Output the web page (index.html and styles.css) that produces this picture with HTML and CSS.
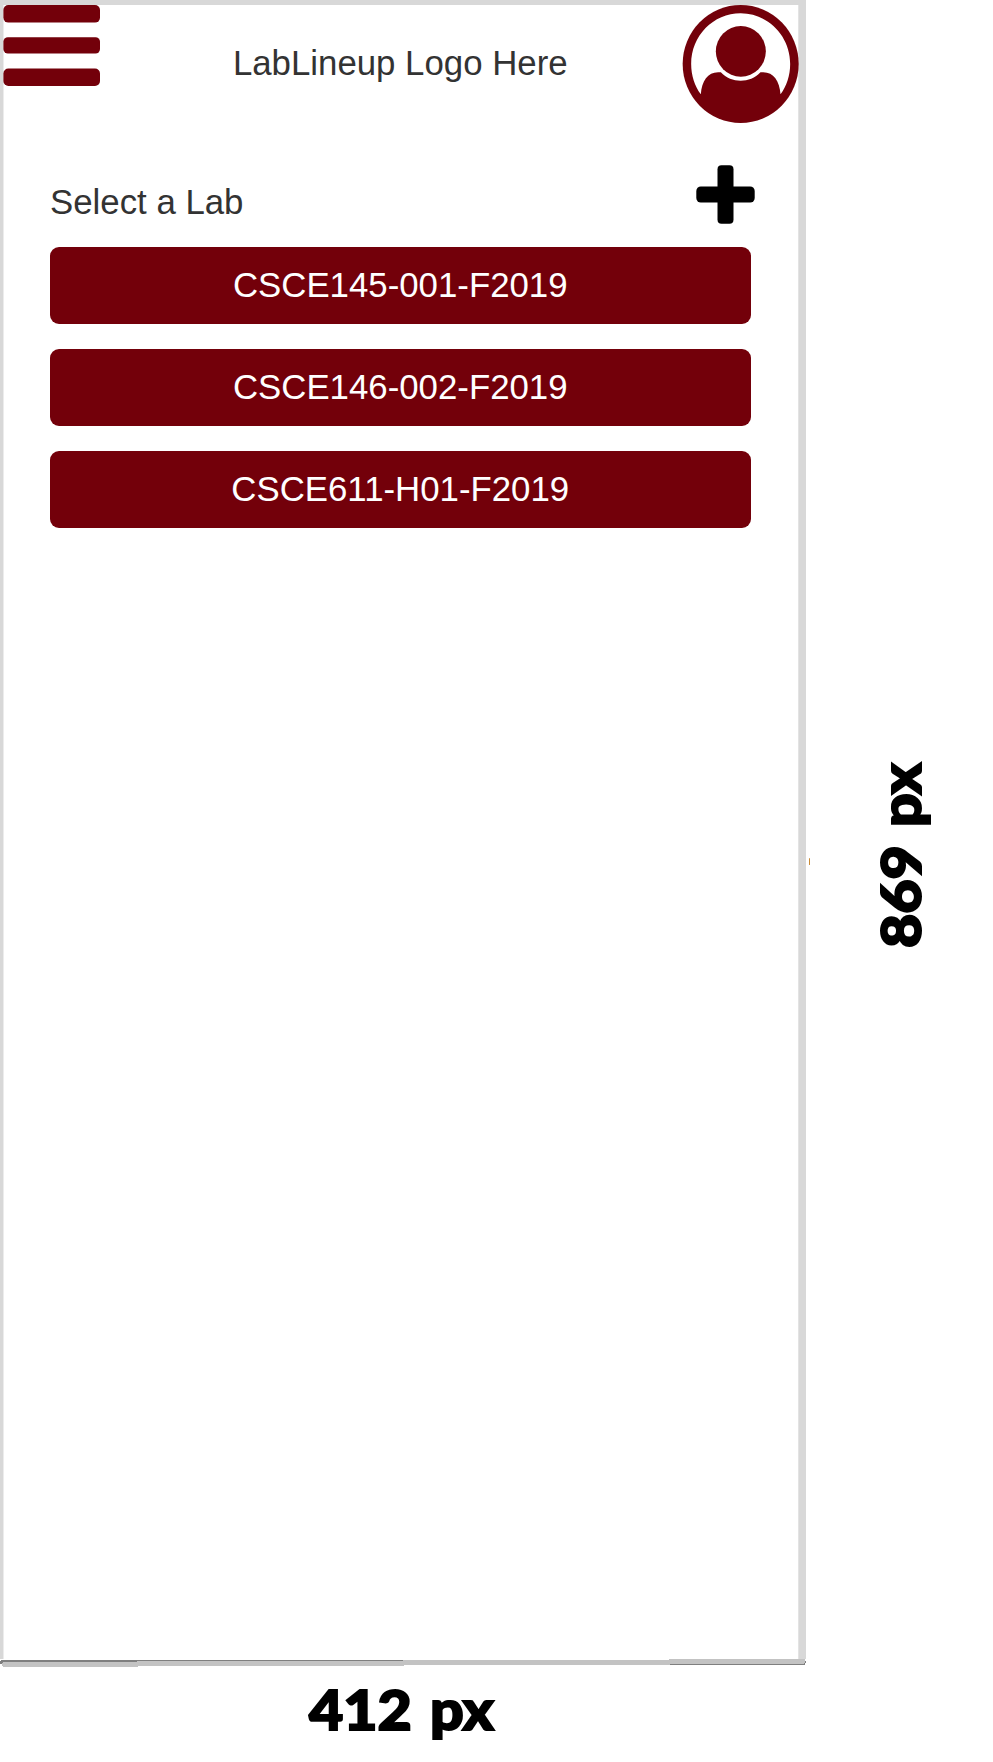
FILE: index.html
```html
<!DOCTYPE html>
<html lang="en">
<head>
<meta charset="utf-8">
<title>LabLineup</title>
<link rel="stylesheet" href="styles.css">
</head>
<body>
<div class="board">
  <div class="row">
    <main class="phone">
      <header class="header">
        <svg class="menu" viewBox="0 0 98 82" role="img" aria-label="Menu">
          <rect x="0.400" y="0" width="96.600" height="17.6" rx="5"/>
          <rect x="0.400" y="32.2" width="96.600" height="16.4" rx="4.5"/>
          <rect x="0.400" y="63.6" width="96.600" height="17.4" rx="5"/>
        </svg>
        <div class="logo">LabLineup Logo Here</div>
        <svg class="avatar" viewBox="125.500 15 351 354" preserveAspectRatio="none" role="img" aria-label="Profile">
          <ellipse class="disc" cx="301.5" cy="192" rx="174" ry="177"/>
          <path class="hole" d="M182 283C164 259 153 226 153 192C153 108 219 40 301.500 40C384 40 450 108 450 192C450 226 439 259 421 283C418 239 397 212 361 217C329 251 274 251 242 217C206 212 185 239 182 283Z"/>
          <ellipse class="disc" cx="302" cy="154" rx="75" ry="76"/>
        </svg>
      </header>
      <div class="title">
        <h1 class="heading">Select a Lab</h1>
        <svg class="plus" viewBox="0 0 59 59" role="img" aria-label="Add">
          <rect x="21.500" y="0.300" width="16" height="58.400" rx="4"/>
          <rect x="0.300" y="21.500" width="58.400" height="16" rx="4.500"/>
        </svg>
      </div>
      <nav class="labs">
        <a class="lab">CSCE145-001-F2019</a>
        <a class="lab">CSCE146-002-F2019</a>
        <a class="lab">CSCE611-H01-F2019</a>
      </nav>
    </main>
    <aside class="side">
      <span class="speck"></span>
      <svg class="height-label" viewBox="0 0 100 260"><text class="dimension" transform="translate(50.500 222) rotate(-90)" textLength="185" lengthAdjust="spacingAndGlyphs">869 px</text></svg>
    </aside>
  </div>
  <svg class="edge" viewBox="0 0 806 8" shape-rendering="crispEdges">
    <path class="edge-light" d="M2 1H138V8H3L2 6ZM137 1H404V7H137ZM403 1H670V6H403ZM669 0H805V5H669Z"/>
    <path class="edge-dark" d="M1 1H137V3H3L2 5H0V2H1ZM137 1H403V2H137ZM670 5H804V4H805V2H806V4H805V6H670Z"/>
  </svg>
  <footer class="foot">
    <svg class="width-label" viewBox="0 0 240 94"><text class="dimension" x="28" y="63" textLength="185" lengthAdjust="spacingAndGlyphs">412 px</text></svg>
  </footer>
</div>
</body>
</html>
```

FILE: styles.css
```css
* { box-sizing: border-box; }
body {
  margin: 0;
  background: #fff;
  color: #333;
  font-family: "Liberation Sans", Arial, sans-serif;
  font-size: 34.8px;
}
svg { display: block; flex: none; }
.board { width: 993px; height: 1762px; display: flex; flex-direction: column; }
.row { display: flex; height: 1659px; }
.phone {
  width: 806px;
  border: solid #d8d8d8;
  border-width: 5px 7px 0 3px;
  box-shadow: inset 1px 0 #ececec, inset -1px 0 #e3e3e3;
}
.header { display: flex; align-items: flex-start; height: 118px; }
.menu { width: 98px; height: 82px; fill: #73000a; }
.logo { flex: 1; text-align: center; line-height: 40px; margin-top: 38px; padding-left: 17.500px; }
.avatar { width: 117px; height: 118px; }
.disc { fill: #73000a; }
.hole { fill: #fff; }
.title { display: flex; justify-content: space-between; padding: 42px 44px 0 47px; height: 123px; }
.heading { margin: 17px 0 0; font-size: inherit; font-weight: 400; line-height: 40px; }
.plus { width: 59px; height: 59px; fill: #000; }
.labs { display: flex; flex-direction: column; gap: 25px; padding: 1px 48.500px 0 47px; }
.lab {
  height: 77px;
  line-height: 76px;
  border-radius: 9px;
  background: #73000a;
  color: #fff;
  text-align: center;
}
.side { display: flex; align-items: flex-start; }
.speck { width: 1px; height: 7px; margin: 858px 60px 0 3px; background: #c98a35; border-radius: 1px; }
.height-label { width: 100px; height: 260px; margin-top: 726px; }
.dimension {
  font-family: Lato, sans-serif;
  font-size: 55.500px;
  font-weight: 900;
  word-spacing: 4px;
  fill: #000;
  stroke: #000;
  stroke-width: 2px;
}
.edge { width: 806px; height: 8px; }
.edge-light { fill: #c3c3c3; }
.edge-dark { fill: #7f7f7f; }
.foot { padding: 0 0 0 281px; }
.width-label { width: 240px; height: 94px; }
```
